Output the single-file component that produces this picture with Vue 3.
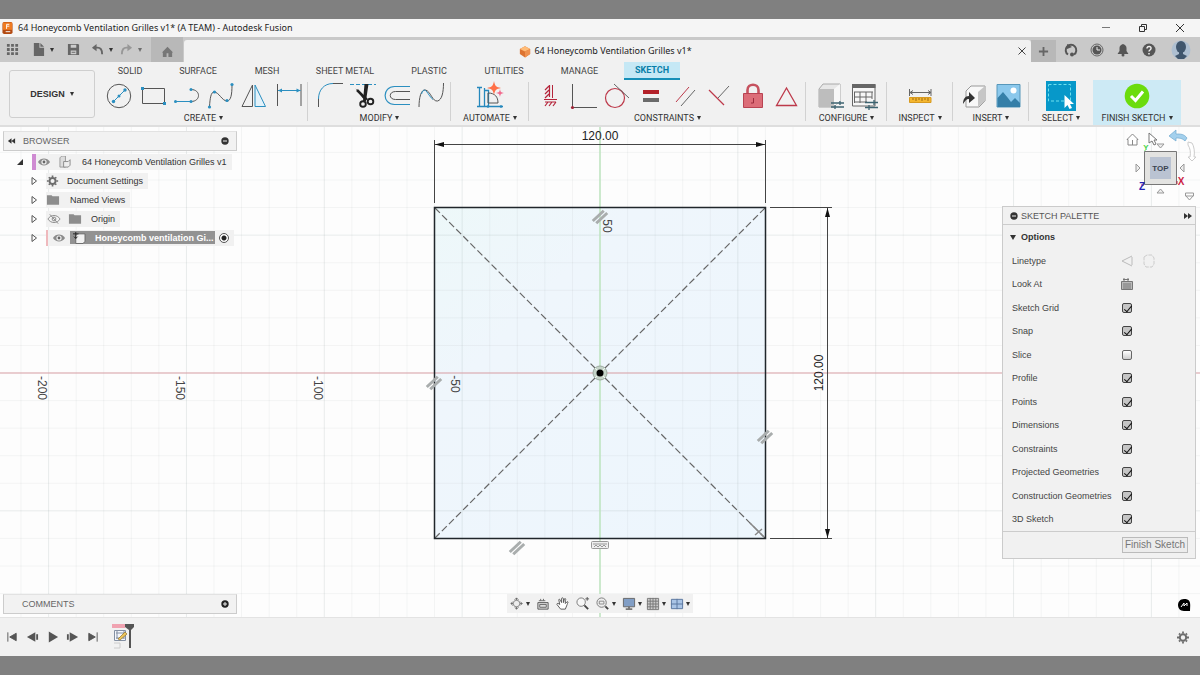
<script setup>
import { ref } from 'vue'

const tabs = ['SOLID', 'SURFACE', 'MESH', 'SHEET METAL', 'PLASTIC', 'UTILITIES', 'MANAGE', 'SKETCH']

const groups = [
  { label: 'CREATE', tools: ['line', 'rectangle', 'slot', 'spline', 'mirror', 'dimension'] },
  { label: 'MODIFY', tools: ['fillet', 'trim', 'offset', 'curve'] },
  { label: 'AUTOMATE', tools: ['automate'] },
  { label: 'CONSTRAINTS', tools: ['horizontal', 'perpendicular', 'tangent', 'equal', 'parallel', 'coincident', 'lock', 'symmetry'] },
  { label: 'CONFIGURE', tools: ['configure', 'table'] },
  { label: 'INSPECT', tools: ['measure'] },
  { label: 'INSERT', tools: ['derive', 'image'] },
  { label: 'SELECT', tools: ['select'] },
  { label: 'FINISH SKETCH', tools: ['finish'], active: true },
]

const icons = {
  line: '<circle cx="14" cy="14" r="11.7" stroke="#555"/><path d="M8 20 20 8" stroke="#2b8fc0"/><g fill="#2b8fc0"><circle cx="8.5" cy="19.5" r="1.7"/><circle cx="14" cy="14" r="1.5"/><circle cx="20" cy="8" r="1.7"/></g>',
  rectangle: '<path d="M3.5 6.500H25.500V21.500H3.500z" stroke="#555"/><path d="M2 5h3v3H2zM24 20h3v3h-3z" fill="#2b8fc0"/>',
  slot: '<path d="M2 19.500H18" stroke="#2b8fc0"/><path d="M18 7.500c10 0 10 12 0 12" stroke="#555"/><g fill="#2b8fc0"><circle cx="2.5" cy="19.5" r="1.5"/><circle cx="18" cy="19.5" r="1.5"/><circle cx="18" cy="7.5" r="1.5"/></g>',
  spline: '<path d="M2.500 25C3 16 4 10 7 10c5 0 8 9 13 9 4 0 5-7 5-16" stroke="#555"/><g fill="#2b8fc0"><circle cx="2.5" cy="25" r="1.6"/><circle cx="7.5" cy="10" r="1.6"/><circle cx="20" cy="18.5" r="1.6"/><circle cx="25" cy="2.5" r="1.6"/></g>',
  mirror: '<path d="M11.5 3V24.500H1z" stroke="#555"/><path d="M14 3V24.500H24.500z" stroke="#2b8fc0" fill="#e3f2fa"/>',
  dimension: '<path d="M2.500 2V24M26 2V24" stroke="#555"/><path d="M3 8.500H25.500" stroke="#2b8fc0"/><path d="M3 8.500l4-2v4zM25.500 8.500l-4-2v4z" fill="#2b8fc0"/>',
  fillet: '<path d="M3.500 25V16" stroke="#555"/><path d="M3.500 17C3.500 8 9 1.500 18 1.500" stroke="#2b8fc0"/><path d="M18 1.500H28" stroke="#555"/>',
  trim: '<path d="M1 2.500H27" stroke="#2b8fc0" stroke-dasharray="4 2"/><path d="M6.500 6.500 19 17 16 19zM15.500 2h4L17 19h-3z" fill="#222"/><path d="M8 8 17 17" stroke="#222" stroke-width="2.500"/><circle cx="14" cy="22" r="2.800" stroke="#222" stroke-width="1.900"/><circle cx="21.5" cy="19.5" r="2.800" stroke="#222" stroke-width="1.900"/>',
  offset: '<path d="M27 4.500H11.500C-1 4.500-1 22.500 11.500 22.500H27" stroke="#2b8fc0" stroke-width="1.200"/><path d="M27 9.500H12.500c-7 0-7 8 0 8H27" stroke="#555"/>',
  curve: '<path d="M2 25C2 16 4 7 8.500 8c5 1 7 12 12 11C25 18 26.500 10 26.500 1" stroke="#555"/><path d="M4.500 12C8 2 11 14 16 17.500" stroke="#2b8fc0"/>',
  automate: '<path d="M3.500 5V24.500M1 5.500h5M1 24.500h5M8.500 6V24.500M6 24.500H27M9 8.500h3.500V24" stroke="#2588bd" stroke-width="1.300"/><path d="M12 11c7 0 10 4 10 10H12z" stroke="#555"/><path d="M18-1c1 5 2 6 7 7-5 1-6 2-7 7-1-5-2-6-7-7 5-1 6-2 7-7z" fill="#ff7048"/><path d="M24 7c.5 3 1 3.5 4 4-3 .5-3.5 1-4 4-.5-3-1-3.500-4-4 3-.5 3.500-1 4-4z" fill="#f26a8d"/><circle cx="12" cy="24.5" r="1.300" fill="#2588bd"/><circle cx="25" cy="24.5" r="1.300" fill="#2588bd"/>',
  horizontal: '<path d="M17.500 3V16M9 17.500H22" stroke="#b5253b"/><path d="M14.500 3V15M14 4l-4 4M14 8l-4 4M14 12l-4 4M10 20h11M13 20l-3 4M17 20l-3 4M21 20l-3 4" stroke="#b5253b" stroke-width="1.200"/>',
  perpendicular: '<path d="M3.500 2V25.500H28" stroke="#555"/><circle cx="3.5" cy="25.5" r="1.600" fill="#9f2336"/>',
  tangent: '<circle cx="12" cy="16" r="9.500" stroke="#bd394a" stroke-width="1.200"/><path d="M11 2 26 16" stroke="#666"/>',
  equal: '<path d="M6 8h16v4H6z" fill="#b32129"/><path d="M6 16h16v4H6z" fill="#6b6b6b"/>',
  parallel: '<path d="M5 20 18 5" stroke="#bd394a"/><path d="M10 24 24 8" stroke="#666"/>',
  coincident: '<path d="M4 8 19 23" stroke="#bd394a" stroke-width="1.300"/><path d="M13 16 24 4" stroke="#666"/>',
  lock: '<path d="M8.500 12V8c0-7 11-7 11 0v4" stroke="#c6525f" stroke-width="2.600"/><path d="M4.500 11.500h19v14h-19z" fill="#dc6d78" stroke="#b94352"/><path d="M14.500 16v5H12" stroke="#9c2c3d"/>',
  symmetry: '<path d="M13.500 6 23.500 23.500h-20z" stroke="#bd394a" stroke-width="1.300"/>',
  configure: '<path d="M3 7 7 2H24V19L18 25H3z" fill="#e7e7e7" stroke="#aaa"/><path d="M3 7H18V25H3z" fill="#bdbdbd"/><path d="M18 7 24 2V19L18 25z" fill="#f7f7f7"/><path d="M15 21H28M15 25H28M24 19v4M19 23v4" stroke="#3c6370" stroke-width="1.300"/>',
  table: '<path d="M2.500 2.500H25V24H2.500z" fill="#f7f7f7" stroke="#666"/><path d="M2 2H25.500V6H2z" fill="#666"/><path d="M4 10H23M4 15H22M4 20H17M10 10v11M16 10v11M22 10v7M4.500 10v11" stroke="#666"/><path d="M15 20.500H28M15 25.500H28M24 18v5M19 23v5" stroke="#3c6370" stroke-width="1.300"/>',
  measure: '<path d="M3.500 7V14M25 7V14M4 10.500H25M7 8.500l-3 2 3 2M22 8.500l3 2-3 2" stroke="#666"/><path d="M3.500 15.500H25V20.500H3.500z" fill="#f4b62f" stroke="#d79a20"/><path d="M7 16v2M10 16v3M13 16v2M16 16v3M19 16v2M22 16v3" stroke="#9f6b12"/>',
  derive: '<path d="M6 9 11 4H25V19L19 25H6z" fill="#f8f8f8" stroke="#999"/><path d="M18 10 25 4V19L18 25z" fill="#c6c6c6"/><path d="M3 22c0-5 2-8 6-8v-4l6 6-6 5v-4c-3 0-4 2-6 5z" fill="#333"/>',
  image: '<path d="M3 2.500H26V25H3z" fill="#8bc8ec" stroke="#5797ba"/><path d="M3.500 16 9 10l5 6 3 4 4-4 5 5v4H3.500z" fill="#357fa8"/><circle cx="19.5" cy="8.5" r="3" fill="#fff"/>',
  select: '<path d="M-1-1H29V29H-1z" fill="#0798c9"/><path d="M1.500 2.500H23.500V19H1.500z" stroke="#6ee0ee" stroke-dasharray="3 2"/><path d="M17.500 13V26l3-3 2 4 2.500-1-2-4h4z" fill="#fff"/>',
  finish: '<circle cx="14" cy="14" r="12.300" fill="#6bdc0c"/><path d="m8 14 4.500 4.500L20 9.500" stroke="#fff" stroke-width="3"/>',
}

const options = ref([
  { label: 'Linetype', kind: 'linetype' },
  { label: 'Look At', kind: 'lookat' },
  { label: 'Sketch Grid', on: true },
  { label: 'Snap', on: true },
  { label: 'Slice', on: false },
  { label: 'Profile', on: true },
  { label: 'Points', on: true },
  { label: 'Dimensions', on: true },
  { label: 'Constraints', on: true },
  { label: 'Projected Geometries', on: true },
  { label: 'Construction Geometries', on: true },
  { label: '3D Sketch', on: true },
])

const eye = '<path d="M1 6C4 1 11 1 14 6 11 11 4 11 1 6z" fill="#8b8b8b"/><circle cx="7.5" cy="6" r="2.8" fill="#eee"/><circle cx="7.5" cy="6" r="1.5" fill="#666"/>'
const eyeOff = '<path d="M1 6C4 1 11 1 14 6 11 11 4 11 1 6zM3 1l9 10" stroke="#888"/><circle cx="7.5" cy="6" r="2" stroke="#888"/>'
const folder = '<path d="M1 1h5l1 1h7v9H1z" fill="#8d8d8d"/>'
const gear = '<circle cx="7" cy="6" r="3.2" stroke="#6c6c6c" stroke-width="2"/><path d="M7 0v2M7 10v2M1 6h2M11 6h2M3 2l1 1M10 9l1 1M11 2l-1 1M4 9l-1 1" stroke="#6c6c6c" stroke-width="1.8"/>'
const bodies = '<path d="M1 2 3 0H7V12H1z" fill="#ddd" stroke="#999"/><path d="M5 6H10L12 4V10L10 12H5z" fill="#eee" stroke="#888"/>'
const component = '<path d="M3 4 5 2H13V10L11 12.5H3z" fill="#f2f2f2" stroke="#666"/><path d="M3 0V7M0 2H6M1 5l2 2 2-2" stroke="#222"/>'

const tree = [
  { text: 'Document Settings', icons: [gear], kind: 'settings' },
  { text: 'Named Views', icons: [folder], kind: 'views' },
  { text: 'Origin', icons: [eyeOff, folder], kind: 'origin' },
]

const gridStep = 27.57
const vertical = Array.from({ length: 45 }, (_, i) => i - 22).map((k) => ({ k, p: 600 + k * gridStep }))
const horizontal = Array.from({ length: 19 }, (_, i) => i - 9).map((k) => ({ k, p: 373 + k * gridStep }))
const parallels = [[600, 217], [434, 383], [765, 437], [517, 548]]

const nav = [
  { name: 'Orbit', menu: true, art: '<path d="M7 1v12M1 7h12M5 3l2-2 2 2M5 11l2 2 2-2M3 5 1 7l2 2M11 5l2 2-2 2" stroke="#666"/><circle cx="7" cy="7" r="3.5" stroke="#888" fill="#eee"/>' },
  { name: 'Look at', art: '<path d="M2 6h11v7H2z" fill="#ddd" stroke="#555"/><path d="M4 8h7v3H4zM3 4h7M5 2v2M8 2v2" stroke="#666"/>' },
  { name: 'Pan', art: '<path d="M5 13 1 8c0-2 2-1 3 0L3 3c0-1 1-1 2 1l1 2V2c0-2 2-1 2 0v4l1-4c1-1 2 0 1 2v3l2-2c2 0 0 2 0 3l-2 5z" fill="#fff" stroke="#555"/>' },
  { name: 'Zoom', art: '<circle cx="5.5" cy="5.5" r="4.5" fill="#f7f7f7" stroke="#777"/><path d="m9 9 4 4" stroke="#444" stroke-width="2"/><path d="M10 2h4M12 0v4" stroke="#555"/>' },
  { name: 'Zoom window', menu: true, art: '<circle cx="6" cy="6" r="5" fill="#eee" stroke="#777"/><path d="m10 10 3 3" stroke="#444" stroke-width="2"/><path d="M3.5 4.500h5v3h-5z" stroke="#888"/>' },
  { name: 'Display settings', menu: true, art: '<path d="M1.5 1.500h12v9h-12z" fill="#819ec5" stroke="#666"/><path d="M4 13h7M7.500 10v3" stroke="#777" stroke-width="2"/>' },
  { name: 'Grid and snaps', menu: true, art: '<path d="M1.5 1.500h12v12h-12z" fill="#ccc" stroke="#777"/><path d="M4.500 1v12M7.500 1v12M10.500 1v12M1 4.500h12M1 7.500h12M1 10.500h12" stroke="#777"/>' },
  { name: 'Viewports', menu: true, art: '<path d="M1.5 2.500h12v10h-12z" fill="#a9c4e5" stroke="#57749d"/><path d="M7.500 2v11M1 7.500h13" stroke="#57749d"/>' },
]

const playback = [
  { name: 'Go to start', art: '<path d="M2 2v10M11 3v8L4 7z" fill="#555" stroke="#555"/>' },
  { name: 'Step back', art: '<path d="M10 2v10L1 7z" fill="#555"/><path d="M12 4v6" stroke="#555" stroke-width="2"/>' },
  { name: 'Play', art: '<path d="M3 1v12l10-6z" fill="#555"/>' },
  { name: 'Step forward', art: '<path d="M4 2v10l9-5z" fill="#555"/><path d="M2 4v6" stroke="#555" stroke-width="2"/>' },
  { name: 'Go to end', art: '<path d="M12 2v10M3 3v8l7-4z" fill="#555" stroke="#555"/>' },
]
</script>

<template>
  <div class="page">
    <header class="titlebar">
      <svg class="app-logo" viewBox="0 0 12 14"><rect x="0.5" y="0.5" width="11" height="13" rx="2" fill="#b34a12" /><path d="M1 1h10v8H1z" fill="#ef7b21" /><path d="M5 8V3h3M5 5h3M4 11h5" stroke="#fff" /></svg>
      <h1>64 Honeycomb Ventilation Grilles v1* (A TEAM) - Autodesk Fusion</h1>
      <div class="window-buttons">
        <button aria-label="Minimize"><svg viewBox="0 0 12 12"><path d="M2 5.500h8" stroke="#777" /></svg></button>
        <button aria-label="Restore"><svg viewBox="0 0 12 12"><path d="M2.500 4.500h5v5h-5zM4.500 4V2.500h5v5H8" stroke="#333" /></svg></button>
        <button aria-label="Close"><svg viewBox="0 0 12 12"><path d="m2 2 8 8M10 2l-8 8" stroke="#333" /></svg></button>
      </div>
    </header>

    <div class="tabbar">
      <div class="quick">
        <button aria-label="Data panel"><svg viewBox="0 0 14 14"><path d="M1 1h3v3H1zM5.500 1h3v3h-3zM10 1h3v3h-3zM1 5.500h3v3H1zM5.500 5.500h3v3h-3zM10 5.500h3v3h-3zM1 10h3v3H1zM5.500 10h3v3h-3zM10 10h3v3h-3z" fill="#666" /></svg></button>
        <button class="with-caret" aria-label="File"><svg viewBox="0 0 14 14"><path d="M2 0h6v5h5v9H2z" fill="#666" /><path d="m9 0 4 4H9z" fill="#666" /></svg><i class="caret"></i></button>
        <button aria-label="Save"><svg viewBox="0 0 14 14"><path d="M1 1h11l1 1v11H1z" fill="#666" /><path d="M4 2h6v3H4zM4 8h6v4H4z" fill="#ccc" /><path d="M5 10h4" stroke="#666" /></svg></button>
        <button class="with-caret" aria-label="Undo"><svg viewBox="0 0 14 14"><path d="M3 5h4c4 0 5 3 5 7" stroke="#666" stroke-width="2" /><path d="m1 5 5-4v8z" fill="#666" /></svg><i class="caret"></i></button>
        <button class="with-caret faint" aria-label="Redo"><svg viewBox="0 0 14 14"><path d="M11 5H7c-4 0-5 3-5 7" stroke="#777" stroke-width="2" /><path d="m13 5-5-4v8z" fill="#777" /></svg><i class="caret"></i></button>
      </div>
      <button class="home" aria-label="Home"><svg viewBox="0 0 14 14"><path d="m1 8 6-6 6 6h-1v5H8V9H6v4H2V8z" fill="#777" /></svg></button>
      <div class="doc-tab">
        <svg class="cube" viewBox="0 0 14 14"><path d="m7 1 6 3v6l-6 4-6-4V4z" fill="#dd7431" /><path d="m1 4 6-3 6 3-6 3z" fill="#ffbc78" /><path d="M7 7v7l6-4V4z" fill="#ef914e" /></svg>
        <span>64 Honeycomb Ventilation Grilles v1*</span>
        <button class="doc-close" aria-label="Close document"><svg viewBox="0 0 12 12"><path d="m2.500 2.500 7 7M9.500 2.500l-7 7" stroke="#444" /></svg></button>
      </div>
      <button class="new-tab" aria-label="New tab"><svg viewBox="0 0 12 12"><path d="M6 1v10M1 6h10" stroke="#666" stroke-width="2" /></svg></button>
      <div class="account">
        <button aria-label="Extensions"><svg viewBox="0 0 14 14"><path d="M4 11.500A5.300 5.300 0 1 1 10 11.500" stroke="#555" stroke-width="2" /><path d="M3 1v5l5-2z" fill="#555" /><circle cx="8" cy="11.5" r="2" fill="#555" /></svg></button>
        <button aria-label="Job status"><svg viewBox="0 0 14 14"><circle cx="7" cy="7" r="6" stroke="#666" /><circle cx="7" cy="7" r="4.5" fill="#555" /><path d="M7 4v3h3" stroke="#eee" /></svg></button>
        <button aria-label="Notifications"><svg viewBox="0 0 14 14"><path d="M1.500 11 3.500 8V5c0-2 1-3 3.500-4 2.500 1 3.500 2 3.500 4v3l2 3z" fill="#555" /><circle cx="7" cy="12" r="1.5" fill="#555" /></svg></button>
        <button aria-label="Help"><svg viewBox="0 0 14 14"><circle cx="7" cy="7" r="6.500" fill="#555" /><path d="M5 5.500c0-3 4.500-2.500 4 0C9 7 7 7 7 8.500M7 10v1.500" stroke="#eee" stroke-width="1.500" /></svg></button>
        <button class="avatar" aria-label="Account"><svg viewBox="0 0 20 20"><circle cx="10" cy="10" r="9.500" fill="#aebfd1" /><ellipse cx="10" cy="7" rx="5" ry="6" fill="#40566d" /><path d="M8 11h4v3l4 2-3 3H7l-3-3 4-2z" fill="#40566d" /></svg></button>
      </div>
    </div>

    <div class="ribbon">
      <button class="design">DESIGN <i class="caret"></i></button>
      <div class="ribbon-main">
        <nav class="tabs">
          <button v-for="t in tabs" :key="t" :class="{ current: t === 'SKETCH' }">{{ t }}</button>
        </nav>
        <div class="groups">
          <section v-for="g in groups" :key="g.label" class="group" :class="{ active: g.active }">
            <div class="tools">
              <button v-for="t in g.tools" :key="t" :aria-label="t"><svg viewBox="0 0 28 28" v-html="icons[t]"></svg></button>
            </div>
            <button class="group-label">{{ g.label }}<i class="caret"></i></button>
          </section>
        </div>
      </div>
    </div>

    <main class="canvas">
      <svg class="drawing" viewBox="0 127 1200 490" preserveAspectRatio="xMidYMid slice">
        <defs><linearGradient id="profile" x2="1" y2="1"><stop stop-color="#edf8f9" /><stop offset="0.3" stop-color="#eff6fc" /><stop offset="1" stop-color="#edf6fd" /></linearGradient></defs>
        <rect x="434.5" y="207.5" width="331" height="331" fill="url(#profile)" />
        <g class="grid">
          <line v-for="v in vertical" :key="v.k" :x1="v.p" :x2="v.p" y1="127" y2="617" :class="{ major: v.k % 5 === 0 }" />
          <line v-for="h in horizontal" :key="h.k" x1="0" x2="1200" :y1="h.p" :y2="h.p" :class="{ major: h.k % 5 === 0 }" />
        </g>
        <path d="M0 373H1200" stroke="#e0a5ab" />
        <path d="M600 127V617" stroke="#bfe6c0" stroke-width="1.5" />
        <path d="M435 208 765 538M765 208 435 538" stroke="#666" stroke-width="1.2" stroke-dasharray="7 3" />
        <rect x="434.5" y="207.5" width="331" height="331" stroke="#20262b" stroke-width="1.5" />
        <path d="M434.5 140V203M765.5 140V203M435 144.500H765M770 207.500H832M770 538.500H832M827.500 208V538" stroke="#444" />
        <path d="M435 144.500l9-2.500v5zM765 144.500l-9-2.500v5zM827.500 208l-2.500 9h5zM827.500 538l-2.500-9h5z" fill="#111" />
        <g v-for="p in parallels" :key="p[0]" :transform="`translate(${p[0]} ${p[1]}) rotate(-43)`"><path d="M-8-2H7M-7 2H8" stroke="#a9adad" stroke-width="3" /></g>
        <g stroke="#888" stroke-width="1.5"><path d="M750 523 764 537M755 535l7-6" /></g>
        <rect x="591.5" y="541.5" width="17" height="7" rx="1" fill="#eee" stroke="#999" />
        <path d="M593 544h14M594 547l2-2 2 2 2-2 2 2 2-2 2 2" stroke="#999" />
        <circle cx="600" cy="373" r="7" fill="#c5d4c9" stroke="#9ba99f" />
        <path d="m595 368 10 10M605 368l-10 10" stroke="#eef6f0" />
        <circle cx="600" cy="373" r="3.5" fill="#000" />
        <g class="dims">
          <text x="600" y="140">120.00</text>
          <text transform="translate(823 373) rotate(-90)">120.00</text>
        </g>
        <g class="ruler">
          <text transform="translate(38 388) rotate(90)">-200</text>
          <text transform="translate(176 388) rotate(90)">-150</text>
          <text transform="translate(314 388) rotate(90)">-100</text>
          <text transform="translate(451 384) rotate(90)">-50</text>
          <text transform="translate(603 226) rotate(90)">50</text>
        </g>
      </svg>

      <aside class="browser">
        <div class="bar">
          <svg viewBox="0 0 10 8"><path d="M5 1v6L1 4zM9 1v6L5 4z" fill="#333" /></svg>
          <h2>BROWSER</h2>
          <button class="dot" aria-label="Collapse browser"><svg viewBox="0 0 8 8"><circle cx="4" cy="4" r="3.7" fill="#333" /><path d="M2 4h4" stroke="#eee" /></svg></button>
        </div>
        <ul class="tree">
          <li class="root">
            <svg class="arrow" viewBox="0 0 8 8"><path d="M7 1v6H1z" fill="#333" /></svg>
            <div class="node"><b class="stripe violet"></b><svg viewBox="0 0 15 12" v-html="eye"></svg><svg viewBox="0 0 13 13" v-html="bodies"></svg><span>64 Honeycomb Ventilation Grilles v1</span></div>
          </li>
          <li v-for="n in tree" :key="n.text">
            <svg class="arrow" viewBox="0 0 8 10"><path d="M2 1.500v7L6.500 5z" stroke="#555" /></svg>
            <div class="node" :class="n.kind"><svg v-for="(ic, i) in n.icons" :key="i" viewBox="0 0 15 12" v-html="ic"></svg><span>{{ n.text }}</span></div>
          </li>
          <li>
            <svg class="arrow" viewBox="0 0 8 10"><path d="M2 1.500v7L6.500 5z" stroke="#555" /></svg>
            <div class="node selected"><b class="stripe pink"></b><svg viewBox="0 0 15 12" v-html="eye"></svg><div class="highlight"><svg viewBox="0 0 13 13" v-html="component"></svg><span>Honeycomb ventilation Gi...</span></div><input type="radio" checked aria-label="Activate component" /></div>
          </li>
        </ul>
      </aside>

      <svg class="viewcube" viewBox="0 0 76 76">
        <path d="M7 12.500 12.500 7l5.500 5.500H17V18H8v-5.500zM12.500 18v-5" stroke="#888" fill="#fff" />
        <path d="M29 6v10l3-2 2 4 2-1-2-4h3z" fill="#fff" stroke="#777" />
        <path d="M37 17h7l-3.500 4zM37 66h7l-3.500-4zM16 37v8l4-4zM64 37v8l-4-4z" fill="#eee" stroke="#999" />
        <path d="M49 9 56 3v4c5 0 8 0 11 4l-2 3c-3-3-6-3-9-3v3z" fill="#a3d0ed" stroke="#70a9ce" stroke-width="0.7" />
        <path d="M68 15l4 1c2 3 3 9 2 14h2l-4 4-4-4h2c1-5 0-9-2-12z" fill="#fff" stroke="#ccc" />
        <path d="M65.500 66h8v3h-8zM66 69l3.500 4 3.500-4" stroke="#999" />
        <path d="M25 54V23" stroke="#65dd65" />
        <path d="M24.500 24.500h32v33h-32z" fill="#e3e3e1" stroke="#777" /><path d="M30 30h21v22H30z" fill="#bac3d2" />
        <path d="M24 58H21M57 57v-3" stroke="#b4264a" />
        <text x="40.5" y="44" class="top">TOP</text>
        <text x="22" y="63" class="axis" fill="#2525b4">Z</text><text x="61" y="58" class="axis" fill="#cc1f45">X</text><text x="26" y="23" class="axis axis-y" fill="#47d447">Y</text>
      </svg>

      <aside class="palette">
        <div class="palette-head">
          <svg viewBox="0 0 8 8"><circle cx="4" cy="4" r="3.7" fill="#333" /><path d="M2 4h4" stroke="#eee" /></svg>
          <h2>SKETCH PALETTE</h2>
          <svg class="expand" viewBox="0 0 10 8"><path d="M1 1v6l4-3zM5 1v6l4-3z" fill="#333" /></svg>
        </div>
        <button class="section"><i class="caret"></i>Options</button>
        <div class="rows">
          <div v-for="(o, i) in options" :key="o.label" class="row">
            <label :for="'option-' + i">{{ o.label }}</label>
            <div v-if="o.kind === 'linetype'" class="pair">
              <button :id="'option-' + i" aria-label="Construction line"><svg viewBox="0 0 12 14"><path d="M11 2 1 7l10 5M11 3v8" stroke="#bbb" /></svg></button>
              <button aria-label="Centerline"><svg viewBox="0 0 12 14"><path d="M1 3l3-2h5l2 3v6l-2 3H3l-2-3z" stroke="#ccc" stroke-dasharray="4 1" /></svg></button>
            </div>
            <button v-else-if="o.kind === 'lookat'" :id="'option-' + i" aria-label="Look at sketch"><svg viewBox="0 0 12 14"><path d="M.5 4.500h11v8H.5z" fill="#bbb" stroke="#777" /><path d="M2 7h8M2 9h8M2 11h8M2 2.500h6M3 1v3M7 1v3" stroke="#777" /></svg></button>
            <input v-else :id="'option-' + i" v-model="o.on" type="checkbox" />
          </div>
        </div>
        <div class="palette-foot"><button>Finish Sketch</button></div>
      </aside>

      <div class="comments bar">
        <h2>COMMENTS</h2>
        <button class="dot" aria-label="Add comment"><svg viewBox="0 0 8 8"><circle cx="4" cy="4" r="3.7" fill="#222" /><path d="M2 4h4M4 2v4" stroke="#eee" /></svg></button>
      </div>

      <div class="navbar">
        <button v-for="n in nav" :key="n.name" :aria-label="n.name"><svg viewBox="0 0 15 15" v-html="n.art"></svg><i v-if="n.menu" class="caret"></i></button>
      </div>

      <button class="assistant" aria-label="Assistant"><svg viewBox="0 0 14 14"><path d="M7 1c8 0 6 6 6 12H7C-1 13-1 1 7 1z" fill="#000" /><path d="m4 9 3-4v3l3-3v3" stroke="#fff" /></svg></button>
    </main>

    <footer class="timeline">
      <div class="playback"><button v-for="p in playback" :key="p.name" :aria-label="p.name"><svg viewBox="0 0 14 14" v-html="p.art"></svg></button></div>
      <svg class="marker" viewBox="0 0 24 28"><path d="M1 1h13v4H1z" fill="#f0a3b1" /><path d="M3.500 7.500h11v10h-11zM5 10h8M6 8v8M13 8v8M5 15h8" stroke="#8490a3" fill="#f5f7fc" /><path d="M3 20h6v5M3 25h6" stroke="#ccc" /><path d="m7 16 7-7 2 2-7 6z" fill="#edc65d" stroke="#93732c" stroke-width="0.7" /><path d="M14 1h9v3l-3 3v18h-2V7l-4-3z" fill="#555" /></svg>
      <button class="settings-button" aria-label="Timeline settings"><svg viewBox="0 0 14 12" v-html="gear"></svg></button>
    </footer>
  </div>
</template>

<style>
body { margin: 0; background: #808080; }
</style>

<style scoped>
* { box-sizing: border-box; }
.page { height: 100vh; padding: 19px 0; display: flex; flex-direction: column; background: #808080; color: #444; font: 9px/12px "Liberation Sans", Arial, sans-serif; }
button { display: flex; align-items: center; justify-content: center; border: 0; padding: 0; margin: 0; background: none; color: inherit; font: inherit; }
svg { display: block; flex: none; fill: none; }
h1, h2 { margin: 0; font: inherit; }
.caret { width: 0; height: 0; border: 2px solid transparent; border-top: 4px solid #333; border-bottom: 0; }

.titlebar { height: 18px; flex: none; display: flex; align-items: center; gap: 5px; padding: 0 14px 0 2px; background: #f5f5f5; color: #333; }
.app-logo { width: 11px; height: 14px; }
.titlebar h1, .doc-tab span { font: 9px/14px "Noto Sans", sans-serif; color: #222; white-space: nowrap; }
.window-buttons { margin-left: auto; display: flex; gap: 25px; }
.window-buttons svg, .doc-close svg { width: 12px; height: 12px; }

.tabbar { height: 25px; flex: none; display: flex; background: #c9c9c9; }
.quick { width: 151px; display: flex; align-items: center; gap: 13px; padding-left: 6px; }
.quick svg { width: 13px; height: 13px; }
.quick .with-caret { gap: 5px; }
.quick button:nth-child(n + 4) { margin-left: -2px; }
.quick button:last-child { margin-left: -6px; }
.faint { opacity: 0.6; }
.home { width: 32px; background: #b8b8b8; padding-top: 4px; }
.home svg { width: 13px; height: 13px; }
.doc-tab { flex: 1; display: flex; align-items: center; justify-content: center; gap: 3px; position: relative; margin: 3px 0 0 1px; padding-right: 4px; border-radius: 3px 3px 0 0; background: #f1f1f1; }
.cube { width: 12px; height: 13px; }
.doc-close { position: absolute; right: 3px; }
.new-tab { width: 25px; margin-top: 3px; background: #b8b8b8; }
.new-tab svg { width: 11px; height: 11px; }
.account { width: 144px; display: flex; align-items: center; gap: 12px; padding-left: 8px; }
.account svg { width: 14px; height: 14px; }
.account .avatar { margin-left: 3px; }
.account .avatar svg { width: 20px; height: 20px; }

.ribbon { height: 65px; flex: none; display: flex; padding: 0 19px 0 9px; background: #f1f1f1; border-bottom: 2px solid #dedede; }
.design { width: 86px; height: 48px; margin: 8px 4px 0 0; gap: 5px; border: 1px solid #cfcfcf; border-radius: 3px; font-weight: bold; color: #333; }
.ribbon-main { flex: 1; display: flex; flex-direction: column; }
.tabs { height: 18px; display: grid; grid-template-columns: 62fr 74fr 64fr 92fr 76fr 74fr 77fr 62fr 501fr; font-family: Roboto, sans-serif; }
.tabs button { white-space: nowrap; }
.tabs .current { margin-left: 6px; background: #c5e8f5; color: #087fa9; font-weight: bold; border-bottom: 2px solid #168fb8; }
.groups { flex: 1; display: grid; grid-template-columns: 209fr 143fr 78fr 277fr 81fr 66fr 76fr 64fr 88fr; }
.group { display: flex; flex-direction: column; align-items: center; position: relative; }
.group:nth-child(-n + 7)::after { content: ""; position: absolute; right: 0; top: 2px; bottom: 4px; border-right: 1px solid #d2d2d2; }
.tools { display: flex; gap: 6px; padding-top: 2px; }
.tools svg { width: 28px; height: 28px; overflow: visible; }
.group-label { gap: 3px; height: 15px; font-family: Roboto, sans-serif; color: #333; white-space: nowrap; }
.group.active { background: #cdeaf5; }

.canvas { flex: 1; min-height: 0; position: relative; overflow: hidden; background: #fdfdfd; }
.drawing { width: 100%; height: 100%; }
.grid line { stroke: #8c9a9a; stroke-opacity: 0.09; }
.grid .major { stroke-opacity: 0.18; }
.dims text { font: 12px "Liberation Sans", Arial, sans-serif; fill: #222; text-anchor: middle; }
.ruler text { font: 12px "Liberation Sans", Arial, sans-serif; fill: #444; text-anchor: middle; }

.browser { position: absolute; left: 3px; top: 4px; width: 234px; }
.bar { height: 20px; display: flex; align-items: center; background: #f2f2f2; border: 1px solid #ccc; border-top-color: #e2e2e2; color: #666; padding: 0 7px 0 3px; }
.bar > svg { width: 9px; height: 8px; margin-right: 7px; }
.bar .dot { margin-left: auto; }
.dot svg { width: 8px; height: 8px; }
.tree { list-style: none; margin: 1px 0 0; padding: 0; color: #333; }
.tree li { height: 19px; display: flex; align-items: center; padding-left: 27px; }
.tree .root { padding-left: 13px; }
.arrow { width: 8px; height: 10px; margin-right: 8px; }
.root .arrow { height: 8px; }
.node { height: 16px; display: flex; align-items: center; gap: 7px; padding: 0 5px 0 0; background: #f1f1f1; white-space: nowrap; }
.node svg { width: 14px; height: 12px; }
.root .node { padding-left: 0; }
.root .node span { padding-left: 3px; }
.root .node svg:first-of-type { margin-left: -6px; }
.views span { padding-left: 3px; }
.origin { padding-left: 1px; }
.origin span { padding-left: 2px; }
.stripe { width: 4px; height: 16px; }
.violet { background: #cf8bd2; }
.pink { width: 2px; background: #efb9bd; }
.selected { padding-left: 0; gap: 4px; }
.highlight { height: 13px; width: 145px; display: flex; align-items: center; gap: 9px; padding-left: 2px; background: #929292; color: #fff; font-weight: bold; }
.selected input { appearance: none; width: 10px; height: 10px; margin: 0; border: 1px solid #555; border-radius: 50%; background: radial-gradient(#222 0 2px, #fff 3px); }

.viewcube { position: absolute; top: 0; right: 4px; width: 76px; height: 76px; overflow: visible; }
.top { font: bold 8px "Liberation Sans", Arial, sans-serif; fill: #3a4350; text-anchor: middle; }
.axis { font: bold 10px "Liberation Sans", Arial, sans-serif; text-anchor: middle; }
.axis-y { font-size: 8px; }

.palette { position: absolute; top: 79px; right: 4px; width: 194px; background: #f1f1f1; border: 1px solid #cbcbcb; }
.palette-head { height: 18px; display: flex; align-items: center; gap: 3px; padding: 0 2px 0 7px; border-bottom: 1px solid #ccc; color: #555; }
.palette-head svg { width: 8px; height: 8px; }
.palette-head .expand { width: 10px; margin-left: auto; }
.section { height: 24px; gap: 5px; padding-left: 7px; font-weight: bold; color: #333; }
.section .caret { border-width: 5px 3px 0; }
.rows { height: 282px; display: grid; grid-auto-rows: 1fr; }
.row { display: grid; grid-template-columns: 110px 1fr; align-items: center; justify-items: start; padding-left: 9px; white-space: nowrap; }
.row svg { width: 12px; height: 14px; }
.row > button { margin-left: -1px; }
.pair { display: flex; gap: 10px; margin-left: -1px; }
.row input { appearance: none; position: relative; width: 10px; height: 10px; margin: 0; border: 1px solid #666; border-radius: 2px; background: linear-gradient(#fff, #ccc); }
.row input:checked { background: #c5c5c5; border-color: #444; }
.row input:checked::after { content: ""; position: absolute; left: 3px; top: 0; width: 3px; height: 7px; border: solid #111; border-width: 0 1px 1px 0; transform: rotate(40deg); }
.palette-foot { height: 27px; display: flex; align-items: center; justify-content: flex-end; padding-right: 7px; border-top: 1px solid #ccc; }
.palette-foot button { height: 16px; padding: 0 2px; border: 1px solid #bbb; background: #ececec; color: #777; font-size: 10px; }

.comments { position: absolute; left: 3px; bottom: 3px; width: 234px; padding-left: 18px; }
.navbar { position: absolute; left: 50%; bottom: 4px; transform: translateX(-50%); height: 19px; display: flex; align-items: center; gap: 6px; padding: 0 3px; background: #f1f1f1; }
.navbar button { gap: 2px; }
.navbar button:nth-last-child(-n + 2) { margin-left: -2px; }
.navbar svg { width: 14px; height: 14px; }
.assistant { position: absolute; right: 9px; bottom: 5px; }
.assistant svg { width: 14px; height: 14px; }

.timeline { height: 39px; flex: none; display: flex; align-items: center; padding: 0 10px 0 6px; background: #f1f1f1; border-top: 1px solid #e3e3e3; }
.playback { display: flex; gap: 7px; }
.playback svg { width: 13px; height: 14px; }
.marker { width: 24px; height: 28px; margin-left: 12px; }
.settings-button { margin-left: auto; }
.settings-button svg { width: 14px; height: 13px; }
</style>
